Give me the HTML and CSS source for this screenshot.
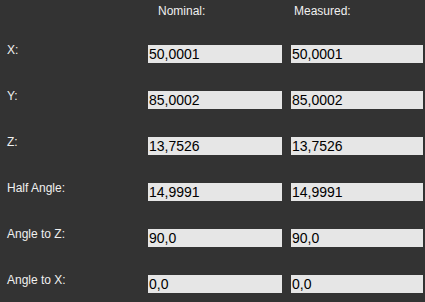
FILE: index.html
```html
<!DOCTYPE html>
<html lang="en">
<head>
    <meta charset="UTF-8">
    <title>Cone Properties</title>
    <link rel="stylesheet" href="styles.css">
</head>
<body>

    <div class="panel">
        <!-- Column headers -->
        <div class="row header">
            <span></span>
            <span class="head nominal">Nominal:</span>
            <span class="head measured">Measured:</span>
        </div>

        <div class="row">
            <span class="label">X:</span>
            <input class="field" type="text" value="50,0001" readonly>
            <input class="field" type="text" value="50,0001" readonly>
        </div>
        <div class="row">
            <span class="label">Y:</span>
            <input class="field" type="text" value="85,0002" readonly>
            <input class="field" type="text" value="85,0002" readonly>
        </div>
        <div class="row">
            <span class="label">Z:</span>
            <input class="field" type="text" value="13,7526" readonly>
            <input class="field" type="text" value="13,7526" readonly>
        </div>
        <div class="row">
            <span class="label">Half Angle:</span>
            <input class="field" type="text" value="14,9991" readonly>
            <input class="field" type="text" value="14,9991" readonly>
        </div>
        <div class="row">
            <span class="label">Angle to Z:</span>
            <input class="field" type="text" value="90,0" readonly>
            <input class="field" type="text" value="90,0" readonly>
        </div>
        <div class="row">
            <span class="label">Angle to X:</span>
            <input class="field" type="text" value="0,0" readonly>
            <input class="field" type="text" value="0,0" readonly>
        </div>
    </div>

</body>
</html>
```

FILE: styles.css
```css
/* Base Styling */
body {
    margin: 0;
    padding: 0;
    background-color: #333333;
    color: #f0f0f0;
    font-family: 'Liberation Sans', Arial, sans-serif;
    font-size: 12px;
    height: 302px;
    overflow: hidden;
}

.panel {
    padding: 4px 0 0 7px;
}

.row {
    display: grid;
    grid-template-columns: 132px 134px 132px;
    column-gap: 9px;
    align-items: start;
    height: 46px;
}

.row.header {
    height: 39px;
}

.row:last-child {
    height: auto;
}

.head {
    line-height: 14px;
}

.nominal {
    padding-left: 10px;
}

.measured {
    padding-left: 3px;
}

.label {
    line-height: 14px;
}

/* Value boxes */
.field {
    margin: 2px 0 0 0;
    height: 18px;
    width: 100%;
    box-sizing: border-box;
    border: none;
    padding: 0 0 0 1px;
    background-color: #e6e6e6;
    color: #000;
    font-family: 'Liberation Sans', Arial, sans-serif;
    font-size: 14px;
    line-height: 18px;
    outline: none;
}
```
